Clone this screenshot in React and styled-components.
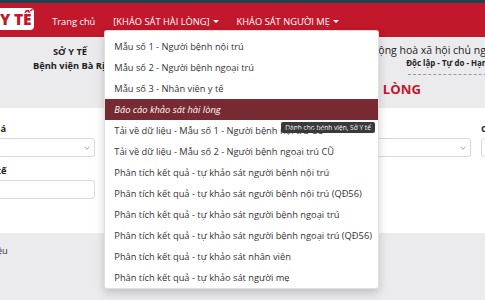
import React from "react";
import styled, { createGlobalStyle } from "styled-components";

const GlobalStyle = createGlobalStyle`
  html, body { margin: 0; padding: 0; }
  body {
    font-family: "Open Sans", "Noto Sans", sans-serif;
    background: #ebebee;
    color: #333;
    overflow: hidden;
    width: 485px;
    height: 300px;
  }
  * { box-sizing: border-box; }
`;

const TopStrip = styled.div`
  height: 3px;
  background: #1d4450;
`;

const NavBar = styled.nav`
  height: 34px;
  background: #c1182b;
  display: flex;
  align-items: center;
  position: relative;
  z-index: 5;
`;

const Logo = styled.div`
  margin-left: -8px;
  height: 22px;
  padding: 0 3px 0 8px;
  background: #fff;
  border-radius: 4px;
  display: flex;
  align-items: center;
  color: #c1182b;
  font-weight: 800;
  font-size: 15.5px;
  letter-spacing: -0.2px;
  margin-right: 9px;
  margin-top: -3px;
`;

const NavItem = styled.div`
  color: #fff;
  font-size: 9.3px;
  padding: 2px 9px 0;
  white-space: nowrap;
  display: flex;
  align-items: center;
  cursor: pointer;
`;

const Caret = styled.span`
  display: inline-block;
  width: 0;
  height: 0;
  margin-left: 3px;
  border-left: 3px solid transparent;
  border-right: 3px solid transparent;
  border-top: 3px solid #fff;
`;

const DropWrap = styled.div`
  position: relative;
`;

const Menu = styled.ul`
  position: absolute;
  top: 17px;
  left: 0;
  width: 275px;
  margin: 0;
  padding: 5px 0 0;
  list-style: none;
  background: #fff;
  border: 1px solid rgba(0, 0, 0, 0.12);
  border-radius: 3px;
  box-shadow: 0 4px 10px rgba(0, 0, 0, 0.18);
`;

const MenuItem = styled.li`
  position: relative;
  height: 21px;
  display: flex;
  align-items: center;
  padding: 0 9px;
  font-size: 9.3px;
  white-space: nowrap;
  color: ${(p) => (p.$active ? "#fff" : "#333")};
  background: ${(p) => (p.$active ? "#782a32" : "transparent")};
  font-style: ${(p) => (p.$active ? "italic" : "normal")};
`;

const Tooltip = styled.span`
  position: absolute;
  top: calc(100% + 2px);
  left: 176px;
  background: #3a3a3a;
  color: #fff;
  font-style: normal;
  font-size: 6.6px;
  line-height: 11px;
  padding: 0 4px;
  border-radius: 2px;
  white-space: nowrap;
`;

const Header = styled.header`
  padding-top: 8px;
  height: 71px;
`;

const HeaderRow = styled.div`
  display: flex;
  align-items: flex-start;
`;

const Agency = styled.div`
  margin-left: 33px;
  width: 74px;
  text-align: center;
  white-space: nowrap;
  font-weight: 700;
  font-size: 9.3px;
  line-height: 14px;
  color: #222;
`;

const Nation = styled.div`
  margin-left: auto;
  margin-right: -90px;
  width: 230px;
  text-align: center;
  white-space: nowrap;
  color: #222;
  margin-top: -2px;
`;

const NationTitle = styled.div`
  font-size: 10.5px;
  line-height: 14px;
`;

const Motto = styled.div`
  font-size: 7.9px;
  font-weight: 700;
  line-height: 13px;
`;

const Dashes = styled.div`
  width: 104px;
  margin: 4px auto 0;
  border-top: 1px dashed #999;
`;

const Title = styled.h1`
  margin: 6px 0 0;
  padding-right: 64px;
  text-align: right;
  font-size: 13.2px;
  line-height: 16px;
  font-weight: 700;
  color: #c1182b;
  white-space: nowrap;
`;

const Card = styled.section`
  background: #fff;
  height: 125px;
  padding-top: 14px;
  overflow: hidden;
`;

const FieldGrid = styled.div`
  display: grid;
  grid-template-columns: repeat(4, 178px);
  column-gap: 10px;
  row-gap: 7px;
  margin-left: -83px;
`;

const Field = styled.div`
  display: flex;
  flex-direction: column;
`;

const Label = styled.label`
  font-size: 9.3px;
  font-weight: 700;
  line-height: 13px;
  margin-bottom: 3px;
  color: #222;
  white-space: nowrap;
`;

const Box = styled.div`
  height: 19px;
  border: 1px solid #d9d9d9;
  border-radius: 3px;
  background: #fff;
  display: flex;
  align-items: center;
  justify-content: flex-end;
  padding-right: 4px;
`;

const Footer = styled.div`
  padding-top: 11px;
  margin-left: -60px;
  font-size: 9.3px;
  line-height: 13px;
  color: #333;
  white-space: nowrap;
`;

const Chevron = () => (
  <svg width="6" height="4" viewBox="0 0 6 4">
    <path d="M0.5 0.8 L3 3.2 L5.5 0.8" fill="none" stroke="#888" strokeWidth="0.8" />
  </svg>
);

const items = [
  "Mẫu số 1 - Người bệnh nội trú",
  "Mẫu số 2 - Người bệnh ngoại trú",
  "Mẫu số 3 - Nhân viên y tế",
  "Báo cáo khảo sát hài lòng",
  "Tải về dữ liệu - Mẫu số 1 - Người bệnh nội trú CŨ",
  "Tải về dữ liệu - Mẫu số 2 - Người bệnh ngoại trú CŨ",
  "Phân tích kết quả - tự khảo sát người bệnh nội trú",
  "Phân tích kết quả - tự khảo sát người bệnh nội trú (QĐ56)",
  "Phân tích kết quả - tự khảo sát người bệnh ngoại trú",
  "Phân tích kết quả - tự khảo sát người bệnh ngoại trú (QĐ56)",
  "Phân tích kết quả - tự khảo sát nhân viên",
  "Phân tích kết quả - tự khảo sát người mẹ",
];

export default function App() {
  return (
    <>
      <GlobalStyle />
      <TopStrip />
      <NavBar>
        <Logo>Y TẾ</Logo>
        <NavItem>Trang chủ</NavItem>
        <DropWrap>
          <NavItem>
            [KHẢO SÁT HÀI LÒNG]
            <Caret />
          </NavItem>
          <Menu>
            {items.map((t, i) => (
              <MenuItem key={t} $active={i === 3}>
                {t}
                {i === 3 && <Tooltip>Dành cho bệnh viện, Sở Y tế</Tooltip>}
              </MenuItem>
            ))}
          </Menu>
        </DropWrap>
        <NavItem>
          KHẢO SÁT NGƯỜI MẸ
          <Caret />
        </NavItem>
      </NavBar>
      <Header>
        <HeaderRow>
          <Agency>
            <div>SỞ Y TẾ</div>
            <div>Bệnh viện Bà Rịa</div>
          </Agency>
          <Nation>
            <NationTitle>Cộng hoà xã hội chủ nghĩa Việt Nam</NationTitle>
            <Motto>Độc lập - Tự do - Hạnh phúc</Motto>
            <Dashes />
          </Nation>
        </HeaderRow>
        <Title>BÁO CÁO KHẢO SÁT HÀI LÒNG</Title>
      </Header>
      <Card>
        <FieldGrid>
          <Field>
            <Label>Đối tượng đánh giá</Label>
            <Box><Chevron /></Box>
          </Field>
          <Field>
            <Label>Đơn vị</Label>
            <Box><Chevron /></Box>
          </Field>
          <Field>
            <Label>Khoa / Phòng</Label>
            <Box><Chevron /></Box>
          </Field>
          <Field>
            <Label>Cơ sở</Label>
            <Box><Chevron /></Box>
          </Field>
          <Field>
            <Label>Loại hình cơ sở y tế</Label>
            <Box />
          </Field>
        </FieldGrid>
      </Card>
      <Footer>Chưa có dữ liệu</Footer>
    </>
  );
}
